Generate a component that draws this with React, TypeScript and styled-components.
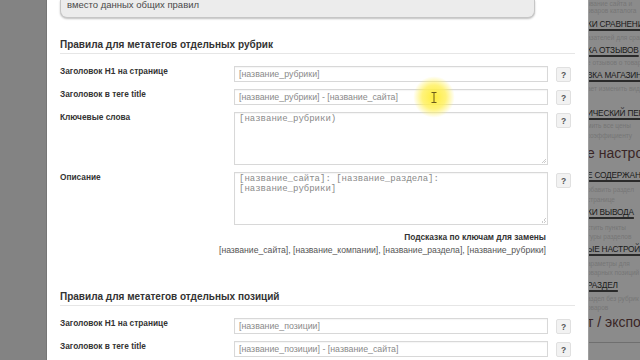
import React from "react";
import styled, { createGlobalStyle } from "styled-components";

const Global = createGlobalStyle`
  html, body { margin: 0; padding: 0; width: 640px; height: 360px; overflow: hidden; background: #fff; }
  #root { width: 640px; height: 360px; }
`;

const Page = styled.div`
  display: flex;
  width: 640px;
  height: 360px;
  overflow: hidden;
  position: relative;
  font-family: "Liberation Sans", Arial, sans-serif;
`;

const LeftStrip = styled.div`
  width: 47px;
  flex: none;
  background: #838383;
  border-right: 1px solid #767676;
  box-sizing: border-box;
`;

const Main = styled.div`
  width: 541px;
  flex: none;
  min-width: 0;
  background: #ffffff;
  padding: 0 13px;
  box-sizing: border-box;
  display: flex;
  flex-direction: column;
`;

const InfoBox = styled.div`
  width: 475px;
  height: 18px;
  flex: none;
  box-sizing: border-box;
  background: #ececec;
  border: 1px solid #c6c6c6;
  border-top: none;
  border-radius: 0 0 7px 7px;
  box-shadow: 0 1px 2px rgba(0, 0, 0, 0.25);
  padding: 0 0 0 6px;
  font-size: 9.5px;
  color: #4a4a4a;
  line-height: 10px;
`;

const SectionTitle = styled.div<{ $top: number }>`
  margin-top: ${(p) => p.$top}px;
  font-size: 10px;
  font-weight: bold;
  color: #333;
  padding-bottom: 2px;
  border-bottom: 1px solid #e6e6e6;
  line-height: 13px;
`;

const Rows = styled.div`
  display: flex;
  flex-direction: column;
  gap: 7px;
  margin-top: 12px;
`;

const Row = styled.div`
  display: flex;
  align-items: flex-start;
`;

const Label = styled.div`
  width: 174px;
  flex: none;
  font-size: 8.3px;
  font-weight: bold;
  color: #333;
  line-height: 11px;
`;

const Field = styled.div<{ $tall?: boolean }>`
  width: 314px;
  height: ${(p) => (p.$tall ? 53 : 16)}px;
  box-sizing: border-box;
  border: 1px solid #d8d8d8;
  box-shadow: inset 0 1px 1px rgba(0, 0, 0, 0.04);
  background: #fff;
  padding: ${(p) => (p.$tall ? "1px 0 0 4px" : "2px 0 0 4px")};
  font-family: ${(p) => (p.$tall ? `"Liberation Mono", "Courier New", monospace` : `"Liberation Sans", Arial, sans-serif`)};
  font-size: ${(p) => (p.$tall ? "9px" : "8.8px")};
  line-height: ${(p) => (p.$tall ? "10px" : "11px")};
  color: #8a8a8a;
  white-space: pre-wrap;
  position: relative;
`;

const Grip = styled.span`
  position: absolute;
  right: 1px;
  bottom: 1px;
  width: 5px;
  height: 5px;
  background: linear-gradient(135deg, transparent 50%, #ccc 50%, #ccc 60%, transparent 60%, transparent 75%, #ccc 75%, #ccc 85%, transparent 85%);
`;

const Help = styled.div`
  margin-left: 8px;
  margin-top: 1px;
  width: 15px;
  height: 15px;
  box-sizing: border-box;
  background: #f2f2f2;
  border: 1px solid #e0e0e0;
  border-radius: 2px;
  font-size: 8.5px;
  font-weight: bold;
  color: #555;
  display: flex;
  align-items: center;
  justify-content: center;
`;

const HintBlock = styled.div`
  width: 486px;
  display: flex;
  flex-direction: column;
  align-items: flex-end;
  margin-top: 7px;
`;

const HintTitle = styled.div`
  font-size: 8.4px;
  font-weight: bold;
  color: #333;
  line-height: 11px;
`;

const HintKeys = styled.div`
  margin-top: 2px;
  font-size: 8.65px;
  color: #555;
  line-height: 11px;
  white-space: nowrap;
`;

const Sidebar = styled.div`
  width: 52px;
  flex: none;
  min-width: 0;
  background: #8b8b8b;
  border-left: 1px solid #9e9e9e;
  box-sizing: border-box;
  overflow: hidden;
`;

const SideInner = styled.div`
  margin-left: -2px;
  width: 120px;
  display: flex;
  flex-direction: column;
`;

const SideSmall = styled.div<{ $gap?: number }>`
  margin-top: ${(p) => p.$gap ?? 0}px;
  font-size: 6.5px;
  line-height: 7px;
  color: #767676;
  white-space: nowrap;
`;

const SideHead = styled.div<{ $gap?: number }>`
  margin-top: ${(p) => p.$gap ?? 0}px;
  font-size: 8.3px;
  line-height: 11px;
  letter-spacing: -0.2px;
  color: #1a1a1a;
  white-space: nowrap;
  text-decoration: underline;
  text-decoration-thickness: 2px;
  text-underline-offset: 2px;
  text-decoration-color: #2a2a2a;
`;

const SideBig = styled.div<{ $gap?: number }>`
  margin-top: ${(p) => p.$gap ?? 0}px;
  font-size: 14px;
  line-height: 16px;
  color: #3a2626;
  white-space: nowrap;
`;

const SideRule = styled.div<{ $gap: number }>`
  margin-top: ${(p) => p.$gap}px;
  height: 1px;
  background: #6f6f6f;
`;

const Highlight = styled.div`
  position: absolute;
  left: 413px;
  top: 76px;
  width: 42px;
  height: 42px;
  border-radius: 50%;
  background: radial-gradient(circle, rgba(255, 236, 50, 0.95) 0%, rgba(255, 240, 90, 0.8) 40%, rgba(255, 250, 180, 0) 70%);
  display: flex;
  align-items: center;
  justify-content: center;
`;

type RowDef = { label: string; value: string; tall?: boolean };

const rubric: RowDef[] = [
  { label: "Заголовок Н1 на странице", value: "[название_рубрики]" },
  { label: "Заголовок в теге title", value: "[название_рубрики] - [название_сайта]" },
  { label: "Ключевые слова", value: "[название_рубрики)", tall: true },
  { label: "Описание", value: "[название_сайта]: [название_раздела]:\n[название_рубрики]", tall: true },
];

const position: RowDef[] = [
  { label: "Заголовок Н1 на странице", value: "[название_позиции]" },
  { label: "Заголовок в теге title", value: "[название_позиции] - [название_сайта]" },
];

function FormRow({ r }: { r: RowDef }) {
  return (
    <Row>
      <Label>{r.label}</Label>
      <Field $tall={r.tall}>
        {r.value}
        {r.tall && <Grip />}
      </Field>
      <Help>?</Help>
    </Row>
  );
}

export default function App() {
  return (
    <>
      <Global />
      <Page>
        <LeftStrip />
        <Main>
          <InfoBox>вместо данных общих правил</InfoBox>
          <SectionTitle $top={20}>Правила для метатегов отдельных рубрик</SectionTitle>
          <Rows>
            {rubric.map((r, i) => (
              <FormRow key={i} r={r} />
            ))}
          </Rows>
          <HintBlock>
            <HintTitle>Подсказка по ключам для замены</HintTitle>
            <HintKeys>[название_сайта], [название_компании], [название_раздела], [название_рубрики]</HintKeys>
          </HintBlock>
          <SectionTitle $top={34}>Правила для метатегов отдельных позиций</SectionTitle>
          <Rows>
            {position.map((r, i) => (
              <FormRow key={i} r={r} />
            ))}
          </Rows>
        </Main>
        <Sidebar>
          <SideInner>
            <SideSmall>звание сайта и</SideSmall>
            <SideSmall>оваров каталога</SideSmall>
            <SideHead $gap={5}>КИ СРАВНЕНИЯ</SideHead>
            <SideSmall $gap={4}>азателей для сравнения</SideSmall>
            <SideHead $gap={4}>КА ОТЗЫВОВ</SideHead>
            <SideSmall $gap={3}>е отзывов о товарах</SideSmall>
            <SideHead $gap={4}>ВКА МАГАЗИНА</SideHead>
            <SideSmall $gap={4}>ает изменить вид</SideSmall>
            <SideHead $gap={16}>ИЧЕСКИЙ ПЕРЕСЧЁТ</SideHead>
            <SideSmall $gap={3}>мить все цены</SideSmall>
            <SideSmall $gap={3}>коэффициенту</SideSmall>
            <SideBig $gap={6}>е настройки</SideBig>
            <SideHead $gap={9}>Е СОДЕРЖАНИЕ</SideHead>
            <SideSmall $gap={5}>обавить раздел</SideSmall>
            <SideSmall $gap={3}>странице</SideSmall>
            <SideHead $gap={4}>КИ ВЫВОДА</SideHead>
            <SideSmall $gap={6}>стить пункты</SideSmall>
            <SideSmall $gap={2}>туры разделов</SideSmall>
            <SideHead $gap={4}>ЫЕ НАСТРОЙКИ</SideHead>
            <SideSmall $gap={5}>араметры для</SideSmall>
            <SideSmall $gap={2}>оварных позиций</SideSmall>
            <SideHead $gap={4}>РАЗДЕЛ</SideHead>
            <SideSmall $gap={4}>аздел без рубрик</SideSmall>
            <SideSmall $gap={2}>оваров</SideSmall>
            <SideBig $gap={3}>т / экспорт</SideBig>
            <SideRule $gap={12} />
          </SideInner>
        </Sidebar>
        <Highlight>
          <svg width="6" height="11" viewBox="0 0 6 11">
            <path d="M0.5 0.5h5M3 0.5v10M0.5 10.5h5" stroke="#6b5a1a" strokeWidth="1" fill="none" />
          </svg>
        </Highlight>
      </Page>
    </>
  );
}
